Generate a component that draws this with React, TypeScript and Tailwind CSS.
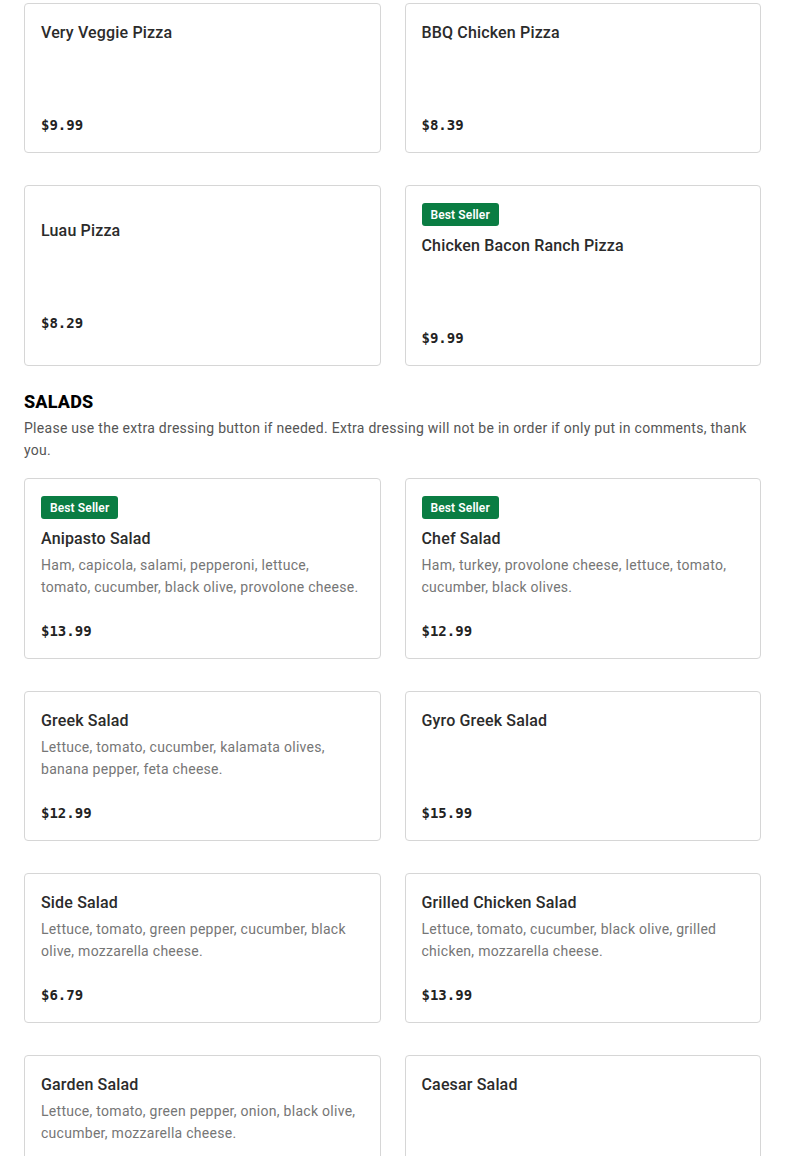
import { ReactNode } from "react";

type Item = {
  name: string;
  price: string;
  desc?: string;
  best?: boolean;
};

const pizzasTail: Item[] = [
  { name: "Very Veggie Pizza", price: "$9.99" },
  { name: "BBQ Chicken Pizza", price: "$8.39" },
  { name: "Luau Pizza", price: "$8.29" },
  { name: "Chicken Bacon Ranch Pizza", price: "$9.99", best: true },
];

const salads: Item[] = [
  {
    name: "Anipasto Salad",
    price: "$13.99",
    best: true,
    desc: "Ham, capicola, salami, pepperoni, lettuce, tomato, cucumber, black olive, provolone cheese.",
  },
  {
    name: "Chef Salad",
    price: "$12.99",
    best: true,
    desc: "Ham, turkey, provolone cheese, lettuce, tomato, cucumber, black olives.",
  },
  {
    name: "Greek Salad",
    price: "$12.99",
    desc: "Lettuce, tomato, cucumber, kalamata olives, banana pepper, feta cheese.",
  },
  { name: "Gyro Greek Salad", price: "$15.99" },
  {
    name: "Side Salad",
    price: "$6.79",
    desc: "Lettuce, tomato, green pepper, cucumber, black olive, mozzarella cheese.",
  },
  {
    name: "Grilled Chicken Salad",
    price: "$13.99",
    desc: "Lettuce, tomato, cucumber, black olive, grilled chicken, mozzarella cheese.",
  },
  {
    name: "Garden Salad",
    price: "$7.99",
    desc: "Lettuce, tomato, green pepper, onion, black olive, cucumber, mozzarella cheese.",
  },
  { name: "Caesar Salad", price: "$8.99" },
];

function ItemCard({ item }: { item: Item }) {
  return (
    <div className="flex flex-col justify-center rounded border border-[#d6d6d6] bg-white pl-4 pr-5 pt-[17px] pb-[15px]">
      {item.best && (
        <span className="mb-2 inline-flex h-[23px] w-fit items-center rounded-[3px] bg-[#0a7d43] px-[9px] text-[12px] font-semibold tracking-[0.01em] text-white">
          Best Seller
        </span>
      )}
      <h3 className="text-[16px] font-medium leading-6 tracking-[0.01em] text-[#2b2b2b]">{item.name}</h3>
      <p className="mt-[3px] min-h-[44px] text-[14px] leading-[22px] tracking-[0.02em] text-[#767676]">{item.desc}</p>
      <div className="mt-[21px] font-['DejaVu_Sans_Mono',monospace] text-[14px] font-bold leading-6 text-[#222]">
        {item.price}
      </div>
    </div>
  );
}

function Grid({ children }: { children: ReactNode }) {
  return <div className="grid grid-cols-2 gap-x-6 gap-y-8">{children}</div>;
}

export default function App() {
  return (
    <main className="min-h-screen bg-white px-6 pt-[3px] font-['Roboto',sans-serif] text-[#2b2b2b]">
      <Grid>
        {pizzasTail.map((it) => (
          <ItemCard key={it.name} item={it} />
        ))}
      </Grid>

      <section className="mt-6">
        <h2 className="text-[18px] font-extrabold uppercase leading-6 tracking-[0.01em] text-black">Salads</h2>
        <p className="mt-[3px] text-[14px] leading-[22px] tracking-[0.02em] text-[#555]">
          Please use the extra dressing button if needed. Extra dressing will not be in order if only put in
          comments, thank you.
        </p>
        <div className="mt-[17px]">
          <Grid>
            {salads.map((it) => (
              <ItemCard key={it.name} item={it} />
            ))}
          </Grid>
        </div>
      </section>
    </main>
  );
}
